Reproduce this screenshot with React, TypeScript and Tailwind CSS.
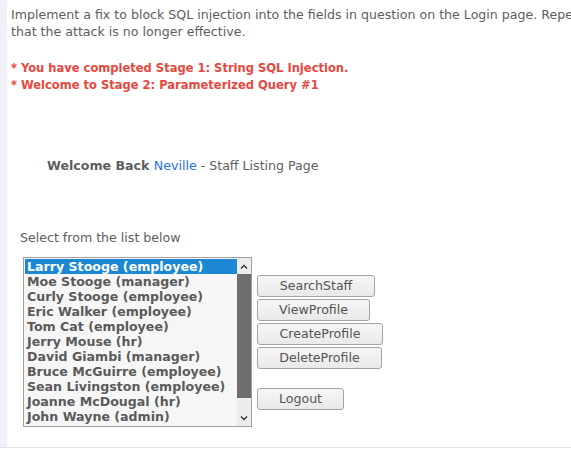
import React from "react";

const staff = [
  "Larry Stooge (employee)",
  "Moe Stooge (manager)",
  "Curly Stooge (employee)",
  "Eric Walker (employee)",
  "Tom Cat (employee)",
  "Jerry Mouse (hr)",
  "David Giambi (manager)",
  "Bruce McGuirre (employee)",
  "Sean Livingston (employee)",
  "Joanne McDougal (hr)",
  "John Wayne (admin)",
];

const btn =
  "h-[22px] rounded-[3px] border border-[#a3a3a3] bg-gradient-to-b from-[#f6f6f6] to-[#e9e9e9] text-[12.6px] text-[#555] leading-[20px] text-center";

export default function App() {
  return (
    <div
      className="w-[571px] h-[450px] overflow-hidden bg-white text-[12.6px] text-[#5e5e5e]"
      style={{ fontFamily: '"DejaVu Sans", sans-serif' }}
    >
      <div className="flex h-[448px] border-b border-[#e2e2e2]">
        <div className="w-[7px] shrink-0 bg-[#f0f0f6]" />
        <div className="min-w-0 flex-1 overflow-hidden pl-[4px] pt-[6px] leading-[17px]">
          <div className="whitespace-nowrap">
            Implement a fix to block SQL injection into the fields in question on the Login page. Repeat stage 1. Verify
          </div>
          <div className="whitespace-nowrap">that the attack is no longer effective.</div>
          <div
            className="mt-[19px] text-[12.8px] font-bold text-[#e8473e]"
            style={{ fontFamily: '"DejaVu Sans Condensed", "DejaVu Sans", sans-serif', fontStretch: "condensed" }}
          >
            <div>* You have completed Stage 1: String SQL Injection.</div>
            <div>* Welcome to Stage 2: Parameterized Query #1</div>
          </div>
          <div className="mt-[64px] pl-[36px]">
            <span className="font-bold">Welcome Back </span>
            <span className="text-[#1f6fe8]">Neville</span>
            <span> - Staff Listing Page</span>
          </div>
          <div className="mt-[55px] pl-[9px]">Select from the list below</div>
          <div className="mt-[11px] flex items-start pl-[12px]">
            <div className="flex h-[170px] w-[229px] border border-[#a0a0a0] bg-[#f6f6f6]">
              <div className="flex-1 pt-[1px] pl-[1px]">
                {staff.map((s, i) => (
                  <div
                    key={s}
                    className={
                      "h-[15px] pl-[2px] font-bold leading-[15px] whitespace-nowrap " +
                      (i === 0 ? "bg-[#1c87d3] text-white" : "text-[#5a5a5a]")
                    }
                  >
                    {s}
                  </div>
                ))}
              </div>
              <div className="flex w-[14px] flex-col bg-[#ececec] pt-[1px]">
                <div className="flex h-[15px] items-center justify-center">
                  <svg width="8" height="5" viewBox="0 0 8 5">
                    <path d="M1 4.5 L4 1.5 L7 4.5" stroke="#333" strokeWidth="1.4" fill="none" />
                  </svg>
                </div>
                <div className="h-[124px] bg-[#6d6d6d]" />
                <div className="flex-1" />
                <div className="flex h-[15px] items-center justify-center">
                  <svg width="8" height="5" viewBox="0 0 8 5">
                    <path d="M1 0.5 L4 3.5 L7 0.5" stroke="#333" strokeWidth="1.4" fill="none" />
                  </svg>
                </div>
              </div>
            </div>
            <div className="ml-[5px] mt-[18px] flex flex-col items-start gap-[2px]">
              <div className={btn + " w-[118px]"}>SearchStaff</div>
              <div className={btn + " w-[113px]"}>ViewProfile</div>
              <div className={btn + " w-[126px]"}>CreateProfile</div>
              <div className={btn + " w-[125px]"}>DeleteProfile</div>
              <div className={btn + " mt-[17px] w-[87px]"}>Logout</div>
            </div>
          </div>
        </div>
      </div>
    </div>
  );
}
